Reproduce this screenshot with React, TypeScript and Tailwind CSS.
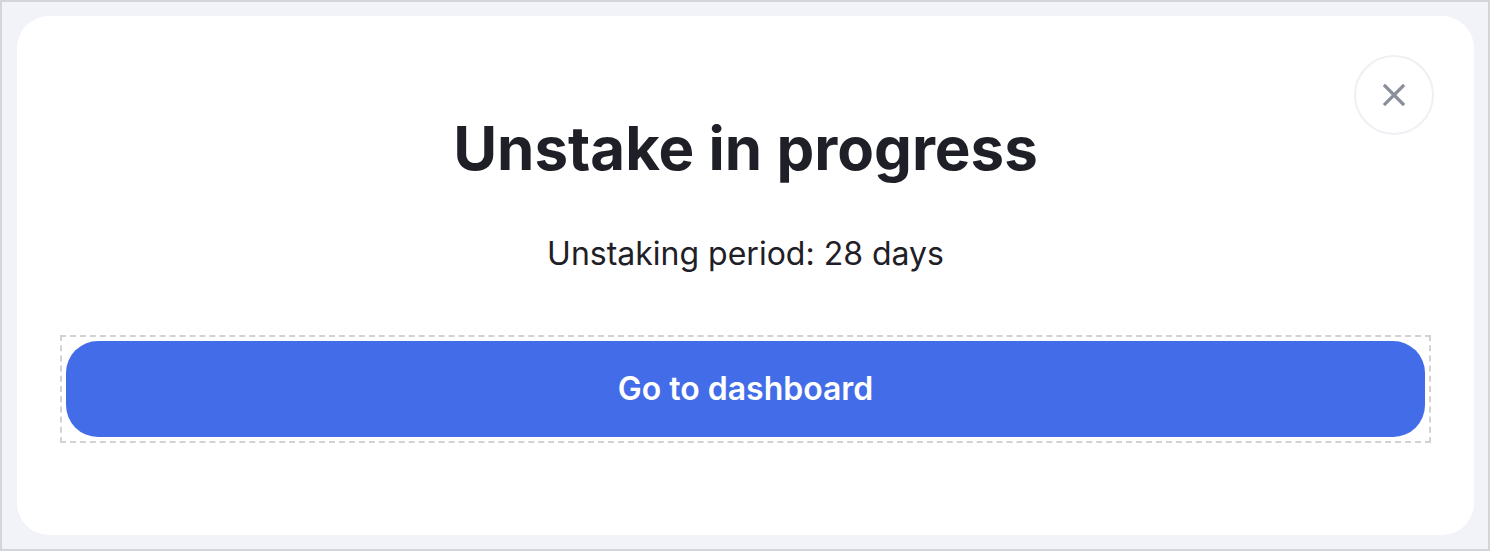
import React from 'react';

const CloseIcon: React.FC = () => (
  <svg width="22" height="22" viewBox="0 0 22 22" fill="none">
    <path d="M2 2L20 20M20 2L2 20" stroke="#8a8f9b" strokeWidth="3.2" strokeLinecap="square" />
  </svg>
);

const App: React.FC = () => {
  return (
    <div
      className="w-[1490px] h-[551px] border-2 border-[#d3d5da] bg-[#f2f3f8] pl-[15px] pr-[14px] pt-[14px] pb-[14px]"
      style={{ fontFamily: 'Inter, "Noto Sans", sans-serif' }}
    >
      <div className="relative h-full w-full rounded-[32px] bg-white px-[43px] pt-[96px]">
        <button className="absolute right-[40px] top-[39px] flex h-[80px] w-[80px] items-center justify-center rounded-full border-2 border-[#eff0f4] bg-white">
          <CloseIcon />
        </button>

        <h1 className="text-center text-[60px] font-bold leading-[72px] text-[#1f2027]">
          Unstake in progress
        </h1>
        <p className="mt-[50px] text-center text-[32px] font-normal leading-[40px] text-[#1f2027]">
          Unstaking period: 28 days
        </p>

        <div className="mt-[61px] border-2 border-dashed border-[#d2d2d2] p-[4px]">
          <button className="flex h-[96px] w-full items-center justify-center rounded-[32px] bg-[#436ce9] text-[32px] font-semibold text-white">
            Go to dashboard
          </button>
        </div>
      </div>
    </div>
  );
};

export default App;
